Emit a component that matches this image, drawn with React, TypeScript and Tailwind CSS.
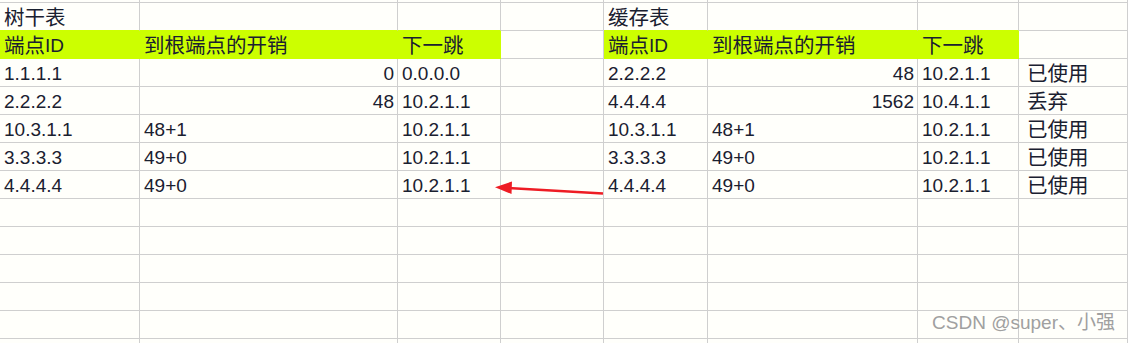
import React from 'react';

type Cell = { t?: string; right?: boolean; yellow?: boolean; underYellow?: boolean };

const CJK = /[\u3000-\u9fff\uff00-\uffef]/;

// split text into CJK / latin runs so each gets its own size
const Runs: React.FC<{ text: string }> = ({ text }) => {
    const parts: { s: string; cjk: boolean }[] = [];
    for (const ch of text) {
        const cjk = CJK.test(ch);
        const last = parts[parts.length - 1];
        if (last && last.cjk === cjk) last.s += ch;
        else parts.push({ s: ch, cjk });
    }
    return (
        <>
            {parts.map((p, i) =>
                p.cjk ? (
                    <span key={i} className="text-[20.5px]">{p.s}</span>
                ) : (
                    <span key={i} className="text-[19px]">{p.s}</span>
                )
            )}
        </>
    );
};

const e: Cell = {};
const Y = (t: string): Cell => ({ t, yellow: true });
const R = (t: string): Cell => ({ t, right: true });
const L = (t: string): Cell => ({ t });
const U = (t = ''): Cell => ({ t, underYellow: true });

const rows: Cell[][] = [
    [U('树干表'), U(), U(), e, U('缓存表'), U(), U(), e],
    [Y('端点ID'), Y('到根端点的开销'), Y('下一跳'), e, Y('端点ID'), Y('到根端点的开销'), Y('下一跳'), e],
    [L('1.1.1.1'), R('0'), L('0.0.0.0'), e, L('2.2.2.2'), R('48'), L('10.2.1.1'), L('已使用')],
    [L('2.2.2.2'), R('48'), L('10.2.1.1'), e, L('4.4.4.4'), R('1562'), L('10.4.1.1'), L('丢弃')],
    [L('10.3.1.1'), L('48+1'), L('10.2.1.1'), e, L('10.3.1.1'), L('48+1'), L('10.2.1.1'), L('已使用')],
    [L('3.3.3.3'), L('49+0'), L('10.2.1.1'), e, L('3.3.3.3'), L('49+0'), L('10.2.1.1'), L('已使用')],
    [L('4.4.4.4'), L('49+0'), L('10.2.1.1'), e, L('4.4.4.4'), L('49+0'), L('10.2.1.1'), L('已使用')],
    [e, e, e, e, e, e, e, e],
    [e, e, e, e, e, e, e, e],
    [e, e, e, e, e, e, e, e],
    [e, e, e, e, e, e, e, e],
    [e, e, e, e, e, e, e, e],
    [e, e, e, e, e, e, e, e],
];

const App: React.FC = () => {
    return (
        <div className="relative w-[1128px] h-[343px] overflow-hidden bg-[#fffffb] text-[#1a2030] font-['Liberation_Sans','Noto_Sans_CJK_SC',sans-serif]">
            <div className="grid grid-cols-[140px_258px_103px_103px_104px_210px_101px_1fr] grid-rows-[3px_repeat(13,28px)]">
                {/* clipped top row */}
                {Array.from({ length: 8 }).map((_, i) => (
                    <div key={'top' + i} className="border-r border-b border-[#cfcfcf]" />
                ))}
                {rows.map((row, r) =>
                    row.map((c, i) => (
                        <div
                            key={r + '-' + i}
                            className={
                                'flex items-center pt-[3px] whitespace-nowrap overflow-hidden ' +
                                (c.yellow
                                    ? 'bg-[#ccff00] border-r border-b border-[#ccff00] '
                                    : c.underYellow
                                    ? 'border-r border-b border-r-[#cfcfcf] border-b-[#ccff00] '
                                    : 'border-r border-b border-[#cfcfcf] ') +
                                (c.right ? 'justify-end pr-[3px] ' : i === 7 ? 'pl-[8px] ' : 'pl-[4px] ')
                            }
                        >
                            {c.t ? <Runs text={c.t} /> : null}
                        </div>
                    ))
                )}
            </div>

            {/* arrow from cache table back to trunk table */}
            <svg className="absolute inset-0 pointer-events-none" width="1128" height="343">
                <line x1="603" y1="193.5" x2="508" y2="188" stroke="#ee1c24" strokeWidth="2.6" />
                <polygon points="495,187.3 512,181.5 511.5,194" fill="#ee1c24" />
            </svg>

            <div className="absolute right-[13px] top-[313px] text-[19px] leading-none text-[#a0a0a0]">
                CSDN @super、小强
            </div>
        </div>
    );
};

export default App;
